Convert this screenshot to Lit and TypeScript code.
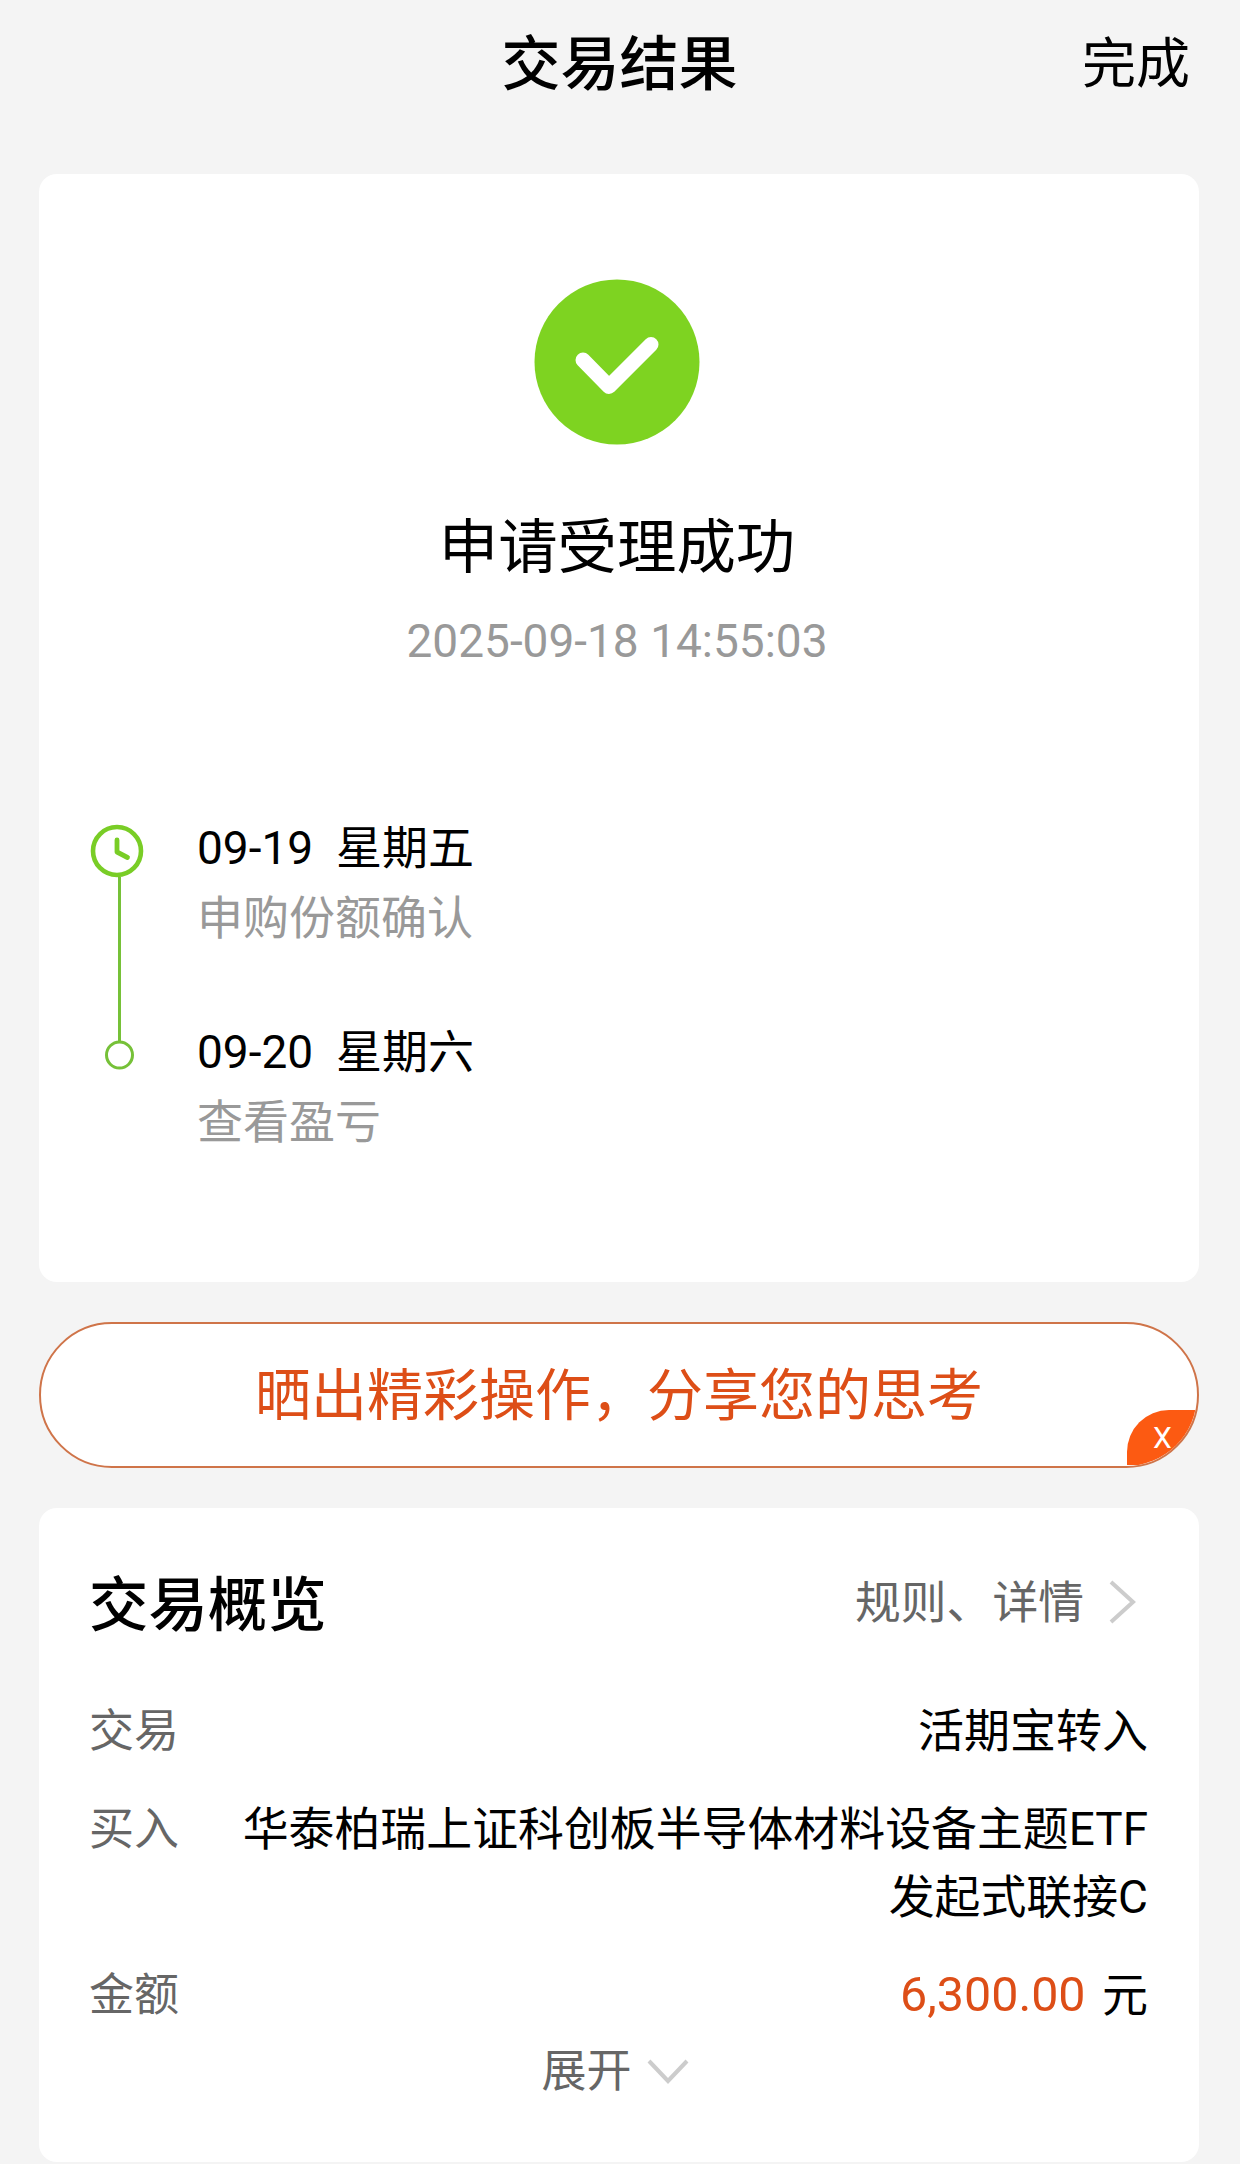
import { LitElement, html, css } from "lit";
import { customElement } from "lit/decorators.js";

interface Step {
  date: string;
  day: string;
  note: string;
}

const STEPS: Step[] = [
  { date: "09-19", day: "星期五", note: "申购份额确认" },
  { date: "09-20", day: "星期六", note: "查看盈亏" },
];

@customElement("app-root")
export class AppRoot extends LitElement {
  static styles = css`
    :host {
      display: block;
      box-sizing: border-box;
      height: 2164px;
      overflow: hidden;
      background: #f4f4f4;
      color: #000;
      font-family: Roboto, "Noto Sans CJK SC", sans-serif;
      font-size: 46px;
      line-height: 68px;
    }
    * {
      box-sizing: border-box;
    }
    svg {
      display: block;
      flex: none;
    }
    .page {
      display: flex;
      flex-direction: column;
      padding: 0 41px 0 39px;
    }
    .bar {
      display: grid;
      grid-template-columns: 1fr auto 1fr;
      align-items: center;
      height: 174px;
      padding: 0 9px 44px 10px;
    }
    .bar-title {
      grid-column: 2;
      font-size: 59px;
      font-weight: 500;
    }
    .done {
      justify-self: end;
      font-size: 54px;
    }
    .card {
      background: #fff;
      border-radius: 18px;
    }
    .result {
      display: flex;
      flex-direction: column;
      height: 1108px;
      padding-top: 105px;
    }
    .status {
      display: flex;
      flex-direction: column;
      align-items: center;
      padding-right: 4px;
    }
    .headline {
      margin-top: 67px;
      font-size: 59.4px;
      line-height: 72px;
    }
    .time {
      margin-top: 27px;
      line-height: 60px;
      color: #999;
    }
    .timeline {
      display: flex;
      gap: 53px;
      margin: 141px 0 0 51px;
    }
    .steps {
      display: flex;
      flex-direction: column;
      gap: 66px;
      padding-top: 2px;
    }
    .when {
      white-space: pre;
    }
    .note {
      margin-top: 2px;
      color: #999;
    }
    .share {
      position: relative;
      display: flex;
      align-items: center;
      justify-content: center;
      height: 146px;
      margin-top: 40px;
      padding-top: 2px;
      overflow: hidden;
      border: 2px solid #cf7449;
      border-radius: 73px;
      background: #fff;
      color: #dd4e17;
      font-size: 56px;
    }
    .close {
      position: absolute;
      right: -2px;
      bottom: 1px;
      width: 72px;
      height: 55px;
      padding-left: 26px;
      border-top-left-radius: 42px;
      background: #fc5a12;
      color: #fff;
      font-size: 30px;
      line-height: 55px;
    }
    .overview {
      height: 654px;
      margin-top: 40px;
      padding: 62px 51px 0 50px;
    }
    .head,
    .row {
      display: flex;
      justify-content: space-between;
    }
    .head {
      align-items: center;
      margin-bottom: 59px;
    }
    .title {
      position: relative;
      top: 2px;
      font-size: 59.4px;
      font-weight: 500;
    }
    .rules {
      display: flex;
      align-items: center;
      gap: 24px;
      padding-right: 12px;
      color: #666;
      font-size: 45.8px;
    }
    .rules svg {
      margin-top: -4px;
    }
    .row {
      margin-bottom: 30px;
    }
    .label {
      flex: none;
      margin-bottom: -1px;
      padding-top: 1px;
      color: #666;
      font-size: 45px;
    }
    .value {
      text-align: right;
    }
    .fund {
      width: 910px;
      font-size: 45.9px;
    }
    .amount {
      margin-right: 5px;
      color: #dd4e17;
      font-size: 48.4px;
    }
    .expand {
      display: flex;
      align-items: center;
      justify-content: center;
      gap: 15px;
      margin-top: -21px;
      padding-right: 7px;
      color: #666;
      font-size: 45px;
    }
  `;

  render() {
    return html`
      <div class="page">
        <header class="bar">
          <div class="bar-title">交易结果</div>
          <div class="done">完成</div>
        </header>

        <section class="card result">
          <div class="status">
            <svg width="166" height="166" viewBox="0 0 166 166" fill="none">
              <circle cx="83" cy="83" r="82.5" fill="#7ed321" />
              <path d="M49 81L75 107.5L117 65.5" stroke="#fff" stroke-width="15" stroke-linecap="round" stroke-linejoin="round" />
            </svg>
            <div class="headline">申请受理成功</div>
            <div class="time">2025-09-18 14:55:03</div>
          </div>

          <div class="timeline">
            <svg width="54" height="260" viewBox="0 0 54 260" fill="none">
              <path d="M29.5 65V229" stroke="#76c138" stroke-width="3" />
              <circle cx="27" cy="39" r="24" stroke="#79cd26" stroke-width="4.6" />
              <path d="M27 28V40L37.5 45.5" stroke="#79cd26" stroke-width="4.8" stroke-linecap="round" stroke-linejoin="round" />
              <circle cx="29.5" cy="243" r="13" stroke="#76c138" stroke-width="3" />
            </svg>
            <div class="steps">
              ${STEPS.map(
                (s) => html`<div>
                  <div class="when">${s.date}  ${s.day}</div>
                  <div class="note">${s.note}</div>
                </div>`
              )}
            </div>
          </div>
        </section>

        <div class="share">
          晒出精彩操作，分享您的思考
          <div class="close">X</div>
        </div>

        <section class="card overview">
          <div class="head">
            <div class="title">交易概览</div>
            <div class="rules">
              规则、详情
              <svg width="28" height="46" viewBox="0 0 28 46" fill="none">
                <path d="M3 3L25 23L3 43" stroke="#ccc" stroke-width="4" />
              </svg>
            </div>
          </div>
          <div class="row">
            <div class="label">交易</div>
            <div class="value">活期宝转入</div>
          </div>
          <div class="row">
            <div class="label">买入</div>
            <div class="value fund">华泰柏瑞上证科创板半导体材料设备主题ETF发起式联接C</div>
          </div>
          <div class="row">
            <div class="label">金额</div>
            <div class="value"><span class="amount">6,300.00</span> 元</div>
          </div>
          <div class="expand">
            展开
            <svg width="42" height="28" viewBox="0 0 42 28" fill="none">
              <path d="M2 3L21 23L40 3" stroke="#ccc" stroke-width="4" />
            </svg>
          </div>
        </section>
      </div>
    `;
  }
}
